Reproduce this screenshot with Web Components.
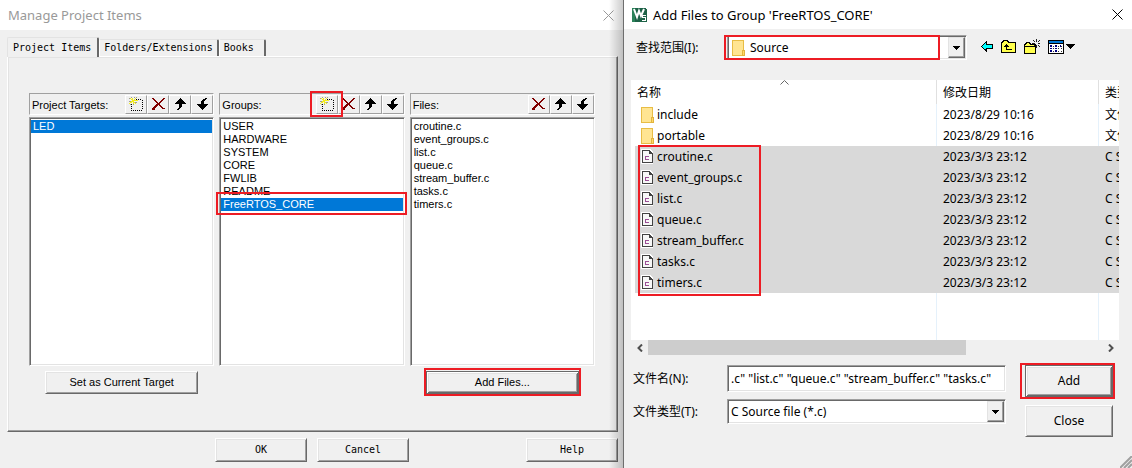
<!DOCTYPE html>
<html lang="zh-CN">
<head>
<meta charset="utf-8">
<title>Manage Project Items</title>
<style>
  html, body { margin: 0; min-height: 100vh; background: #f0f0f0; }
  body { overflow: hidden; }
</style>
</head>
<body>
<project-workspace></project-workspace>
<script>
const define = (name, markup, setup) => {
  const template = document.createElement('template');
  template.innerHTML = markup;
  customElements.define(name, class extends HTMLElement {
    connectedCallback() {
      if (this.shadowRoot) return;
      const root = this.attachShadow({ mode: 'open' });
      root.append(template.content.cloneNode(true));
      if (setup) setup.call(this, root);
    }
  });
};

/* ---------- icons ---------- */
const ICONS = {
  close: [11, 11, '<path d="M.5 .5l10 10M10.5 .5l-10 10" stroke="currentColor" fill="none" shape-rendering="auto"/>'],
  create: [14, 14, `<path d="M7 2h1v1H7zM9 2h1v1H9zM11 2h1v1h-1zM13 3h1v1h-1zM13 5h1v1h-1zM13 7h1v1h-1zM13 9h1v1h-1zM13 11h1v1h-1zM2 7h1v1H2zM2 9h1v1H2zM2 11h1v1H2zM2 13h1v1H2zM4 13h1v1H4zM6 13h1v1H6zM8 13h1v1H8zM10 13h1v1h-1zM12 13h1v1h-1z" fill="#000"/>
    <path d="M0 1h1v1H0zM2 0h1v1H2zM5 0h1v1H5zM0 4h2v1H0zM1 7h1v1H1zM4 7h1v1H4zM7 0h1v1H7zM6 5h2v1H6z" fill="#a0a08c"/>
    <path d="M1 1h1v1H1zM2 2h1v1H2zM3 1h1v2H3zM5 2h1v1H5zM6 1h1v1H6zM3 3h3v1H3zM6 3h3v1H6zM2 4h3v1H2zM1 5h2v1H1zM4 5h1v2H4zM5 5h1v1H5zM6 6h1v1H6zM0 6h1v1H0z" fill="#f3ec1c"/>`],
  remove: [13, 12, '<path d="M0 0h2v1h1v1h1v1h1v1h1v1h1V4h1V3h1V2h1V1h1V0h2v1h-1v1h-1v1h-1v1H9v1H8v2h1v1h1v1h1v1h2v1h-3v-1H9V9H8V8H7V7H6v1H5v1H4v1H3v2H0v-2h1V9h1V8h1V7h1V6h1V5H4V4H3V3H2V2H1V1H0z" fill="#800000"/>'],
  up: [11, 12, '<path d="M5 0h1v1h1v1h1v1h1v1h1v1h1v1H7v3H6v1H5v1H4v1H2v-1h1v-1h1V6H0V5h1V4h1V3h1V2h1V1h1z" fill="#000"/>'],
  down: [11, 12, '<path d="M5 12h1v-1h1v-1h1V9h1V8h1V7h1V6H7V3h1V2h1V1h1V0H8v1H6v1H5v1H4v3H0v1h1v1h1v1h1v1h1v1h1z" fill="#000"/>'],
  folder: [13, 16, '<path d="M.5.500h11v11h1v4H.5z" fill="#ffe592" stroke="#e8bd45"/><path d="M10.500 15V10.500h2V15z" fill="#ffd968" stroke="#e2b43d"/>'],
  cfile: [12, 15, '<path d="M0 0h9l3 3v12H0z" fill="#fff"/><path d="M1.500 1.500H8l3 3v9H1.500z" fill="#f7f7f7" stroke="#424242"/><path d="M8 1v4h3.500z" fill="#424242"/><path d="M8 7.500H4.500v3H8" fill="none" stroke="#9b4f96"/>'],
  app: [15, 15, `<path d="M0 1h13l2 2v12H0z" fill="#1d6247"/><path d="M0 1l3 0v14H0z" fill="#2b8259"/>
    <path d="M2 2l3 8 2-6 2 5 3-7" fill="none" stroke="#fff" stroke-width="2" shape-rendering="auto"/>
    <path d="M14 8.500h-3.500v2H13v2.500h-3" fill="none" stroke="#fff"/>`],
  drop: [7, 4, '<path d="M0 0h7v1H6v1H5v1H4v1H3V3H2V2H1V1H0z" fill="#000"/>'],
  menu: [9, 5, '<path d="M0 0h9v1H8v1H7v1H6v1H5v1H4V4H3V3H2V2H1V1H0z" fill="#000"/>'],
  back: [12, 11, '<path d="M5.500.500v3h6v3.500h-6v3L.5 5.500z" fill="#0ff" stroke="#000"/>'],
  parent: [15, 13, '<path d="M.5 12.500v-10h1v-1h1v-1h4v1h1v1h7v10z" fill="#ffff4d" stroke="#000"/><path d="M5 4h1v1h1v1h1v1H6v2h5v1H5V7H3V6h1V5h1z" fill="#000"/>'],
  newdir: [16, 15, '<path d="M.5 14.500v-9h1v-1h1v-1h3v1h1v1h5v9z" fill="#ffff4d" stroke="#000"/><path d="M.5 7.500h11" stroke="#000"/><path d="M12 0h1v3h-1zM12 6h1v3h-1zM8 4h3v1H8zM14 4h2v1h-2zM9 1h1v1H9zM10 2h1v1h-1zM14 2h1v1h-1zM15 1h1v1h-1zM10 6h1v1h-1zM14 6h1v1h-1zM15 7h1v1h-1z" fill="#222"/>'],
  views: [16, 14, '<path d="M.5.500h15v13H.5z" fill="#fff" stroke="#000"/><path d="M1 1h14v2H1z" fill="#0078d7"/><path d="M0 3h16v1H0z" fill="#000"/><path d="M2 5h2v2H2zM7 5h2v2H7zM12 5h1v2h-1zM2 8h2v1H2zM7 8h2v1H7zM2 10h2v2H2zM7 10h2v2H7z" fill="#000080"/><path d="M5 6h1v1H5zM10 6h1v1h-1zM13 6h1v1h-1zM5 8h1v1H5zM10 8h1v1h-1zM13 8h1v1h-1zM5 11h1v1H5zM10 11h1v1h-1zM13 11h1v1h-1z" fill="#333"/>'],
  sort: [9, 5, '<path d="M.5 4.500l4-4 4 4" fill="none" stroke="#666" shape-rendering="auto"/>'],
  left: [6, 8, '<path d="M5 0.500L1.500 4L5 7.500" fill="none" stroke="#505050" stroke-width="2" shape-rendering="auto"/>'],
  right: [6, 8, '<path d="M1 0.500L4.500 4L1 7.500" fill="none" stroke="#505050" stroke-width="2" shape-rendering="auto"/>'],
  grip: [12, 12, '<path d="M0 12L12 0M4 12l8-8M8 12l4-4" stroke="#a0a0a0" stroke-width="2" fill="none" shape-rendering="auto"/>']
};
define('win-icon', '<style>:host{display:inline-flex;flex:none}svg{display:block}</style>', function (root) {
  const [w, h, art] = ICONS[this.getAttribute('name')];
  root.innerHTML += `<svg aria-hidden="true" width="${w}" height="${h}" viewBox="0 0 ${w} ${h}" shape-rendering="crispEdges">${art}</svg>`;
});

/* ---------- push button ---------- */
define('win-button', `
<style>
  :host { display: block; position: relative; }
  button { display: block; width: 100%; height: 100%; padding: 0; font: inherit; color: #000; background: #f0f0f0;
    border: 1px solid; border-color: #fff #696969 #696969 #fff;
    box-shadow: inset 1px 1px #e3e3e3, inset -1px -1px #a0a0a0; }
  :host([default]) button { border-color: #696969; box-shadow: inset 1px 1px #fff, inset -1px -1px #696969, inset 2px 2px #e3e3e3, inset -2px -2px #a0a0a0; }
  :host([marked])::after { content: ""; position: absolute; inset: var(--mark, -2px); border: 2px solid #ed1c24; pointer-events: none; }
</style>
<button type="button"><slot></slot></button>`);

/* ---------- dialog frame ---------- */
define('win-frame', `
<style>
  :host { display: flex; flex-direction: column; background: #f0f0f0; min-width: 0; }
  header { display: flex; align-items: center; gap: 6px; height: var(--bar, 30px); padding: 0 9px 0 8px; background: #fff; color: var(--title, #000); }
  h1 { flex: 1; margin: 0; font: 13px/18px "Noto Sans", sans-serif; white-space: nowrap; }
  .close { display: flex; padding: 0; border: 0; background: none; color: inherit; }
</style>
<header><slot name="icon"></slot><h1><slot name="title"></slot></h1>
<button class="close" type="button" aria-label="Close window"><win-icon name="close"></win-icon></button></header>
<slot></slot>`);

/* ---------- captioned list ---------- */
define('item-list', `
<style>
  :host { display: flex; flex-direction: column; gap: 2px; min-width: 0; font: 11px/13px "Liberation Sans", Arial, sans-serif; }
  .caption { display: flex; align-items: center; height: 20px; padding-left: 2px; border: 1px solid; border-color: #a0a0a0 #fff #fff #a0a0a0; }
  .caption span { flex: 1; white-space: nowrap; padding-top: 3px; }
  .tool { position: relative; box-sizing: border-box; width: 22px; height: 19px; padding: 0; display: flex; align-items: center; justify-content: center;
    background: #f0f0f0; border: 1px solid; border-color: #fff #a0a0a0 #a0a0a0 #fff; }
  .tool.marked::after { content: ""; position: absolute; z-index: 1; inset: -5px -6px -4px -7px; border: 2px solid #ed1c24; pointer-events: none; }
  ul { height: 244px; margin: 0; padding: 2px 1px 1px; list-style: none; background: #fff; border: 1px solid; border-color: #a0a0a0 #fff #fff #a0a0a0;
    box-shadow: inset 1px 1px #696969, inset -1px -1px #e3e3e3; }
  li { position: relative; padding-left: 2px; white-space: nowrap; }
  li[aria-selected=true] { background: #0078d7; color: #fff; }
  li.marked::after { content: ""; position: absolute; inset: -6px -4px -4px -5px; border: 2px solid #ed1c24; pointer-events: none; }
</style>
<div class="caption"><span id="cap"></span></div>
<ul role="listbox" aria-labelledby="cap"></ul>`, function (root) {
  root.getElementById('cap').textContent = this.getAttribute('caption');
  const bar = root.querySelector('.caption');
  const names = { create: 'New (Insert)', remove: 'Remove', up: 'Move up', down: 'Move down' };
  for (const tool of this.getAttribute('tools').split(' ')) {
    const b = document.createElement('button');
    b.type = 'button';
    b.className = 'tool' + (this.getAttribute('mark') === tool ? ' marked' : '');
    b.setAttribute('aria-label', names[tool]);
    b.innerHTML = `<win-icon name="${tool}"></win-icon>`;
    bar.append(b);
  }
  const chosen = this.getAttribute('selected');
  for (const text of this.getAttribute('items').split(' ')) {
    const li = document.createElement('li');
    li.setAttribute('role', 'option');
    li.setAttribute('aria-selected', text === chosen);
    if (text === chosen && this.hasAttribute('mark')) li.className = 'marked';
    li.textContent = text;
    root.querySelector('ul').append(li);
  }
});

/* ---------- Manage Project Items ---------- */
define('manage-dialog', `
<style>
  :host { display: block; position: relative; min-width: 0; --mono: 10px/12px "DejaVu Sans Mono", monospace; }
  :host::after { content: ""; position: absolute; inset: 0 0 0 auto; width: 14px; background: linear-gradient(90deg, transparent, rgba(0,0,0,.2)); pointer-events: none; }
  win-frame { min-height: 100%; --title: #999; }
  main { padding: 7px 5px 6px 7px; }
  .tabs { display: flex; align-items: flex-end; padding-right: 1px; }
  .tabs button { box-sizing: border-box; position: relative; height: 17px; min-width: 47px; padding: 0 4px; text-align: left; font: var(--mono); color: #000; background: #f0f0f0;
    border: solid; border-width: 1px 2px 0 1px; border-color: #e3e3e3 #696969 #fff #fff; border-radius: 2px 2px 0 0; }
  .tabs button[aria-selected=true] { height: 20px; padding: 0 6px 0 5px; margin-bottom: -1px; z-index: 1; border-left-color: #e3e3e3; }
  .panel { border: 1px solid; border-color: #fff #696969 #696969 #fff; box-shadow: inset -1px -1px #a0a0a0, inset 1px 1px #e3e3e3; padding: 36px 22px 37px 21px; }
  .lists { display: grid; grid-template-columns: repeat(3, minmax(0, 1fr)); column-gap: 5px; row-gap: 5px; font: 11px/13px "Liberation Sans", Arial, sans-serif; }
  .lists win-button { height: 23px; margin: 0 16px; }
  .lists win-button.add { grid-column: 3; --mark: -3px -2px -2px; }
  footer { display: flex; gap: 10px; padding: 6px 0 0 208px; font: var(--mono); }
  footer win-button { width: 92px; height: 24px; }
  footer win-button:last-child { margin-left: auto; }
</style>
<win-frame>
  <span slot="title">Manage Project Items</span>
  <main>
    <div class="tabs" role="tablist">
      <button type="button" role="tab" aria-selected="true">Project Items</button>
      <button type="button" role="tab" aria-selected="false">Folders/Extensions</button>
      <button type="button" role="tab" aria-selected="false">Books</button>
    </div>
    <div class="panel" role="tabpanel">
      <div class="lists">
        <item-list caption="Project Targets:" tools="create remove up down" items="LED" selected="LED"></item-list>
        <item-list caption="Groups:" tools="create remove up down" mark="create" items="USER HARDWARE SYSTEM CORE FWLIB README FreeRTOS_CORE" selected="FreeRTOS_CORE"></item-list>
        <item-list caption="Files:" tools="remove up down" items="croutine.c event_groups.c list.c queue.c stream_buffer.c tasks.c timers.c"></item-list>
        <win-button>Set as Current Target</win-button>
        <win-button class="add" default marked>Add Files...</win-button>
      </div>
    </div>
    <footer><win-button>OK</win-button><win-button>Cancel</win-button><win-button>Help</win-button></footer>
  </main>
</win-frame>`);

/* ---------- labelled field: text box or drop-down ---------- */
define('win-field', `
<style>
  :host { display: grid; grid-template-columns: var(--label, 94px) minmax(0, 1fr); align-items: center; min-width: 0; }
  label { white-space: nowrap; }
  .box { position: relative; display: flex; }
  input, select { appearance: none; box-sizing: border-box; width: 100%; height: var(--field, 27px); margin: 0; padding: 0 3px; border-radius: 0; font: inherit; color: #000; background: #fff;
    border: 1px solid; border-color: #a0a0a0 #fff #fff #a0a0a0; box-shadow: inset 1px 1px #696969, inset -1px -1px #e3e3e3; outline: 0; }
  .drop { position: absolute; inset: 2px 2px 2px auto; width: 15px; display: flex; align-items: center; justify-content: center; background: #f0f0f0;
    border: 1px solid; border-color: #e3e3e3 #696969 #696969 #e3e3e3; box-shadow: inset -1px -1px #a0a0a0; pointer-events: none; }
  .lead { position: absolute; left: 5px; top: 5px; pointer-events: none; }
  .lead + select { padding-left: 22px; }
  .mark { position: absolute; inset: 0 27px 0 -3px; border: 2px solid #ed1c24; pointer-events: none; }
</style>
<label for="field"></label><div class="box"></div>`, function (root) {
  root.querySelector('label').textContent = this.getAttribute('label');
  const box = root.querySelector('.box');
  const value = this.getAttribute('value');
  if (this.hasAttribute('options')) {
    box.innerHTML = (this.hasAttribute('folder') ? '<win-icon class="lead" name="folder"></win-icon>' : '') +
      '<select id="field"><option></option></select><span class="drop"><win-icon name="drop"></win-icon></span>' +
      (this.hasAttribute('folder') ? '<span class="mark"></span>' : '');
    box.querySelector('option').textContent = value;
  } else {
    box.innerHTML = '<input id="field" type="text">';
    box.firstChild.value = value;
  }
});

/* ---------- file listing ---------- */
define('file-table', `
<style>
  :host { display: block; position: relative; background: #fff; }
  table { width: 100%; table-layout: fixed; border-collapse: separate; border-spacing: 0; }
  .date { width: 162px; } .kind { width: 21px; }
  th, td { box-sizing: border-box; height: 21px; padding: 0 0 0 6px; overflow: hidden; white-space: nowrap; text-align: left; font-weight: 400; line-height: 21px; border-left: 1px solid #e5f1fb; }
  th { height: 24px; border-color: #e0e0e0; }
  th:first-child, td:first-child { border-left: 0; }
  td:first-child { padding-left: 10px; }
  tr.on td { border-color: #d9d9d9; background: #d9d9d9; }
  tr.on td:first-child { background: linear-gradient(#d9d9d9, #d9d9d9) 4px 0 no-repeat; }
  .name { display: flex; align-items: center; height: 21px; }
  .name win-icon { width: 16px; }
  .rest td { height: 47px; }
  .sort { position: absolute; left: 149px; top: 0; }
  .files { position: relative; }
  .mark { position: absolute; left: 7px; top: 65px; width: 119px; height: 147px; border: 2px solid #ed1c24; pointer-events: none; }
  .scroll { display: flex; align-items: center; height: 15px; background: #f0f0f0; }
  .scroll button { width: 17px; height: 15px; padding: 0; border: 0; background: none; display: flex; align-items: center; justify-content: center; }
  .track { flex: 1; height: 15px; }
  .thumb { width: 70%; height: 15px; background: #cdcdcd; }
</style>
<div class="files">
  <table><colgroup><col><col class="date"><col class="kind"></colgroup>
    <thead><tr><th>名称</th><th>修改日期</th><th>类型</th></tr></thead><tbody></tbody></table>
  <win-icon class="sort" name="sort"></win-icon><span class="mark"></span>
</div>
<div class="scroll"><button type="button" aria-label="Scroll left"><win-icon name="left"></win-icon></button><div class="track"><div class="thumb"></div></div><button type="button" aria-label="Scroll right"><win-icon name="right"></win-icon></button></div>`, function (root) {
  const body = root.querySelector('tbody');
  const row = (name, date, kind, icon, on) => {
    body.insertAdjacentHTML('beforeend', `<tr class="${on ? 'on' : ''}"><td><div class="name"><win-icon name="${icon}"></win-icon>${name}</div></td><td>${date}</td><td>${kind}</td></tr>`);
  };
  ['include', 'portable'].forEach(n => row(n, '2023/8/29 10:16', '文件夹', 'folder', false));
  ['croutine.c', 'event_groups.c', 'list.c', 'queue.c', 'stream_buffer.c', 'tasks.c', 'timers.c']
    .forEach(n => row(n, '2023/3/3 23:12', 'C Source file', 'cfile', true));
  body.insertAdjacentHTML('beforeend', '<tr class="rest" aria-hidden="true"><td></td><td></td><td></td></tr>');
});

/* ---------- Add Files to Group ---------- */
define('files-dialog', `
<style>
  :host { display: block; position: relative; min-width: 0; border-left: 1px solid #6e6e6e; font: 12px/18px "Noto Sans", "Noto Sans CJK SC", sans-serif; }
  win-frame { min-height: 100%; --bar: 29px; }
  .look { display: flex; align-items: center; padding: 6px 57px 0 12px; }
  .look win-field { flex: 1; --label: 91px; --field: 25px; }
  .tools { display: flex; align-items: center; gap: 8px; margin-left: 14px; padding-bottom: 2px; }
  .tools button { display: flex; align-items: center; gap: 2px; padding: 0; border: 0; background: none; }
  file-table { margin: 20px 13px 0 7px; }
  .form { display: grid; grid-template-columns: minmax(0, 1fr) 88px; column-gap: 19px; row-gap: 8px; align-items: start; padding: 10px 19px 0 9px; }
  .form win-button { height: 32px; --mark: -2px -2px -2px -5px; }
  .form win-field.type { --field: 25px; margin-top: -6px; }
  .grip { position: absolute; right: 0; bottom: 0; }
</style>
<win-frame>
  <win-icon slot="icon" name="app"></win-icon><span slot="title">Add Files to Group 'FreeRTOS_CORE'</span>
  <div class="look">
    <win-field label="查找范围(I):" value="Source" options folder></win-field>
    <div class="tools">
      <button type="button" aria-label="Back"><win-icon name="back"></win-icon></button>
      <button type="button" aria-label="Up one level"><win-icon name="parent"></win-icon></button>
      <button type="button" aria-label="New folder"><win-icon name="newdir"></win-icon></button>
      <button type="button" aria-label="View menu"><win-icon name="views"></win-icon><win-icon name="menu"></win-icon></button>
    </div>
  </div>
  <file-table></file-table>
  <div class="form">
    <win-field label="文件名(N):" value='.c" "list.c" "queue.c" "stream_buffer.c" "tasks.c"'></win-field>
    <win-button default marked>Add</win-button>
    <win-field class="type" label="文件类型(T):" value="C Source file (*.c)" options></win-field>
    <win-button>Close</win-button>
  </div>
</win-frame>
<win-icon class="grip" name="grip"></win-icon>`);

define('project-workspace', `
<style>
  :host { display: grid; grid-template-columns: minmax(0, 623fr) minmax(0, 509fr); min-height: 100vh; color: #000; }
  manage-dialog, files-dialog { display: grid; }
</style>
<manage-dialog></manage-dialog><files-dialog></files-dialog>`);
</script>
</body>
</html>
